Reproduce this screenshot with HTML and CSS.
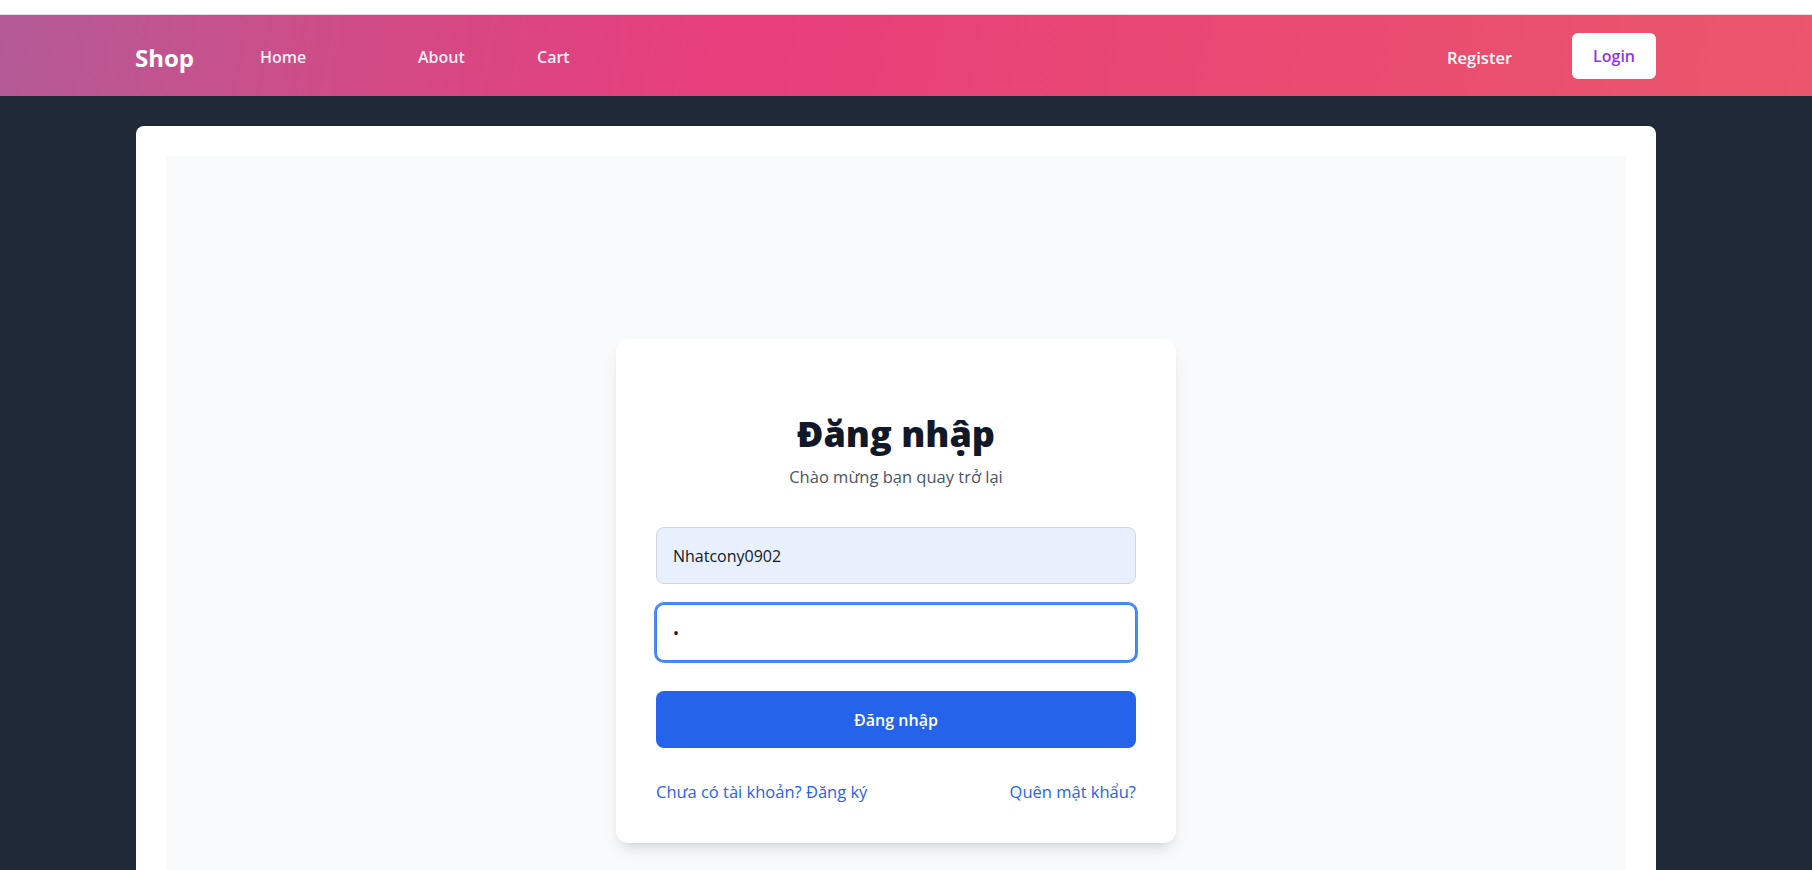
FILE: index.html
```html
<!DOCTYPE html>
<html lang="vi">
<head>
<meta charset="utf-8">
<title>Shop - Đăng nhập</title>
<link rel="stylesheet" href="styles.css">
</head>
<body>
<div class="topstrip"></div>
<nav class="navbar">
  <div class="nav-left">
    <a class="brand" href="#">Shop</a>
    <a class="nav-link w-home" href="#">Home</a>
    <a class="nav-link w-about" href="#">About</a>
    <a class="nav-link" href="#">Cart</a>
  </div>
  <div class="nav-right">
    <a class="nav-link register" href="#">Register</a>
    <a class="login-btn" href="#">Login</a>
  </div>
</nav>
<main class="main">
  <div class="panel">
    <div class="panel-inner">
      <div class="login-card">
        <h1 class="title">Đăng nhập</h1>
        <p class="subtitle">Chào mừng bạn quay trở lại</p>
        <form class="form">
          <input class="field autofill" type="text" value="Nhatcony0902">
          <input class="field focused" type="password" value="a">
          <button class="submit" type="button">Đăng nhập</button>
        </form>
        <div class="links">
          <a href="#">Chưa có tài khoản? Đăng ký</a>
          <a href="#">Quên mật khẩu?</a>
        </div>
      </div>
    </div>
  </div>
</main>
</body>
</html>
```
FILE: styles.css
```css
* { box-sizing: border-box; }
html, body { margin: 0; padding: 0; }
body {
  background: #1f2937;
  font-family: "Open Sans", "Noto Sans", sans-serif;
  height: 870px;
  overflow: hidden;
}
a { text-decoration: none; }
.topstrip {
  height: 15px;
  background: #ffffff;
  border-bottom: 1px solid #e6dde3;
}
.navbar {
  height: 81px;
  background: linear-gradient(100deg, #b35b97 0%, #d44a85 22%, #e83e7c 40%, #e94a72 70%, #ea566b 100%);
  display: flex;
  align-items: center;
  justify-content: space-between;
  padding: 0 156px 0 135px;
}
.nav-left, .nav-right { display: flex; align-items: center; }
.nav-left { padding-top: 3px; }
.brand {
  width: 125px;
  color: #ffffff;
  font-size: 24px;
  font-weight: 700;
}
.nav-link {
  color: rgba(255, 255, 255, 0.92);
  font-size: 16px;
  font-weight: 600;
}
.w-home { width: 158px; }
.w-about { width: 119px; }
.register { color: #ffffff; margin-right: 60px; font-size: 16.5px; padding-top: 3px; }
.login-btn {
  height: 46px;
  padding: 0 21px;
  display: flex;
  align-items: center;
  background: #ffffff;
  color: #9333ea;
  border-radius: 6px;
  font-size: 16px;
  font-weight: 600;
}
.main { padding: 30px 156px 0 136px; }
.panel {
  background: #ffffff;
  border-radius: 8px;
  padding: 30px 30px 0;
}
.panel-inner {
  background: #f9fafb;
  display: flex;
  justify-content: center;
  padding: 183px 0 80px;
}
.login-card {
  width: 560px;
  background: #ffffff;
  border-radius: 12px;
  padding: 75px 40px 39px;
  box-shadow: 0 10px 15px -3px rgba(0,0,0,0.1), 0 4px 6px -4px rgba(0,0,0,0.1);
}
.title {
  margin: 0 0 11px;
  text-align: center;
  font-size: 36px;
  line-height: 40px;
  font-weight: 800;
  color: #111827;
}
.subtitle {
  margin: 0 0 38px;
  text-align: center;
  font-size: 16.5px;
  line-height: 24px;
  color: #4b5563;
}
.form { display: flex; flex-direction: column; }
.field {
  height: 57px;
  width: 100%;
  padding: 0 16px;
  border: 1px solid #d1d5db;
  border-radius: 8px;
  font-family: inherit;
  font-size: 16px;
  color: #111827;
  outline: none;
}
.autofill { background: #e8f0fe; }
.focused {
  margin-top: 20px;
  background: #ffffff;
  border-color: #3b82f6;
  box-shadow: 0 0 0 2px #4a8af4;
}
.submit {
  margin-top: 30px;
  height: 57px;
  border: none;
  border-radius: 8px;
  background: #2563eb;
  color: #ffffff;
  font-family: inherit;
  font-size: 16px;
  font-weight: 600;
}
.links {
  margin-top: 32px;
  display: flex;
  justify-content: space-between;
  line-height: 24px;
}
.links a {
  color: #2563eb;
  font-size: 16.5px;
  font-weight: 500;
}
```
